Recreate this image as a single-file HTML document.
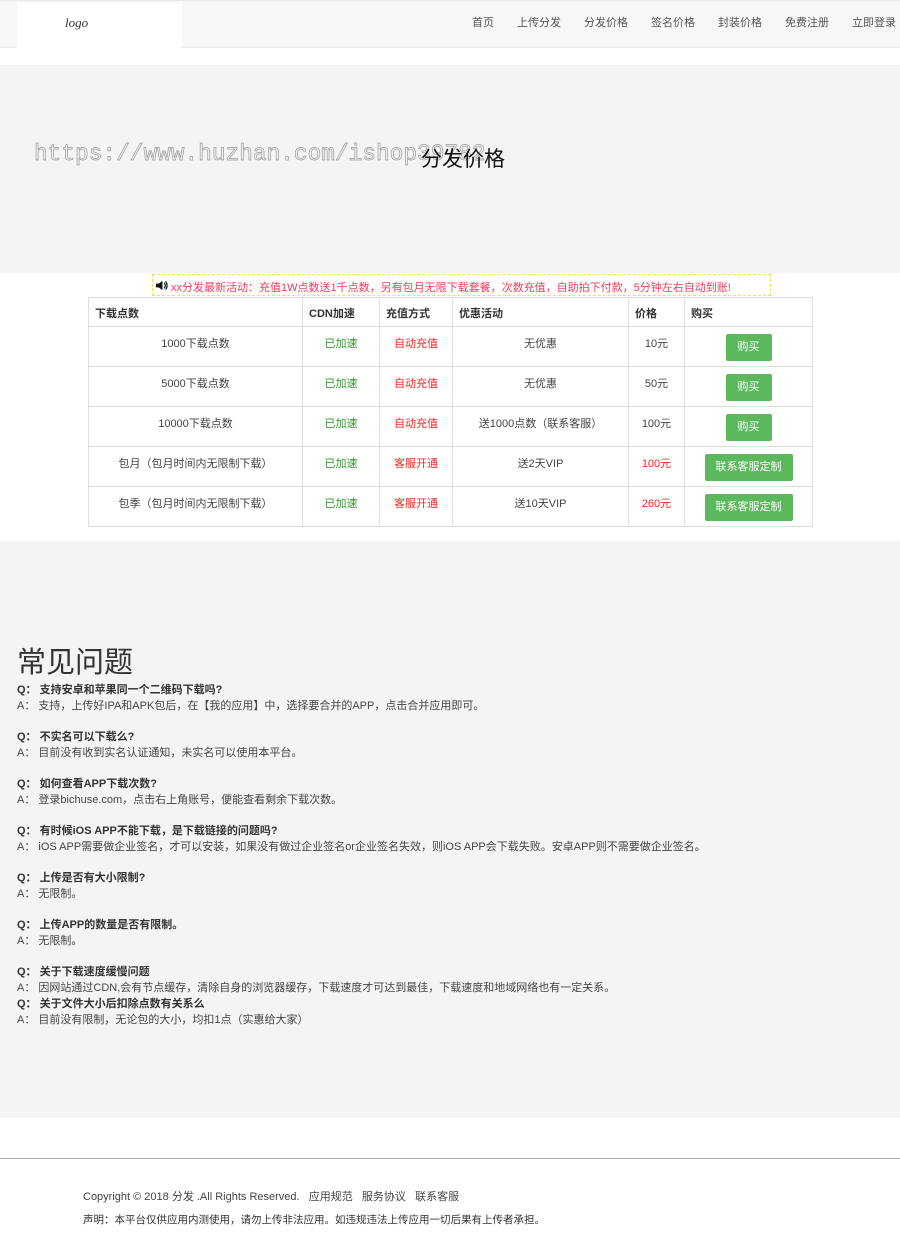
<!DOCTYPE html>
<html><head><meta charset="utf-8"><style>
*{margin:0;padding:0;box-sizing:border-box}
body{width:900px;height:1234px;font-family:"Liberation Sans","Noto Sans CJK SC",sans-serif;background:#fff;color:#333;font-size:11px;position:relative;overflow:hidden}
.nav{position:absolute;top:0;left:0;width:900px;height:48px;background:#f7f7f7;border-top:1px solid #e8e8e8;border-bottom:1px solid #e8e8e8}
.logo{position:absolute;left:17px;top:2px;width:165px;height:45px;background:#fff;font-family:"Liberation Serif",serif;font-style:italic;font-size:13px;padding:12px 0 0 48px;color:#333}
.menu{position:absolute;top:13px;right:4px;font-size:11px;color:#555}
.menu span{margin-left:23px}
.hero{position:absolute;top:65px;left:0;width:900px;height:208px;background:#f4f4f4}
.wm{position:absolute;left:34px;top:76px;font-family:"Liberation Mono",monospace;font-size:22.8px;color:#f4f4f4;-webkit-text-stroke:0.7px #999}
.ht{position:absolute;left:421px;top:78px;font-size:21px;color:#111}
.notice{position:absolute;left:152px;top:274px;width:619px;height:22px;border:1px dashed #e5e55a;color:#f03c5a;font-size:11px;padding:4px 0 0 18px}
.spk{position:absolute;left:2px;top:4px;width:13px;height:13px}
table{position:absolute;left:88px;top:297px;width:725px;border-collapse:collapse;font-size:11px}
td,th{border:1px solid #ddd;height:40px;vertical-align:top;padding-top:8px;text-align:center;font-weight:normal;color:#444}
th{height:29px;text-align:left;font-weight:bold;padding:7px 6px 0;color:#333}
.g{color:#2a9a2a}.r{color:#f22}
.btn{display:inline-block;background:#5cb85c;color:#fff;border-radius:2px;height:27px;line-height:27px;padding:0 12px;margin-top:-1px}
.btn2{padding:0 11px}
.gray{position:absolute;top:541px;left:0;width:900px;height:577px;background:#f4f4f4}
h2{position:absolute;left:17px;top:98px;font-size:29px;font-weight:normal;color:#333}
.faq{position:absolute;left:17px;top:141px;font-size:11px;line-height:16px;color:#444}
.faq b{color:#333}
.faq p.sp{height:15px}
.foot{position:absolute;top:1158px;left:0;width:900px;border-top:1px solid #aaa}
.f1{position:absolute;left:83px;top:1188px;font-size:11px;color:#444}
.f2{position:absolute;left:83px;top:1212px;font-size:10.5px;color:#333}
</style></head><body>
<div class="nav"><div class="logo">logo</div>
<div class="menu"><span>首页</span><span>上传分发</span><span>分发价格</span><span>签名价格</span><span>封装价格</span><span>免费注册</span><span>立即登录</span></div></div>
<div class="hero"><div class="wm">https://www.huzhan.com/ishop39782</div><div class="ht">分发价格</div></div>
<div class="notice"><svg class="spk" viewBox="0 0 14 14"><path d="M1 5h3l4-3v10l-4-3H1z" fill="#111"/><path d="M10 4q2 3 0 6M11.5 2.5q3 4.5 0 9" stroke="#111" fill="none" stroke-width="1.3"/></svg>xx分发最新活动：充值1W点数送1千点数，另有包月无限下载套餐，次数充值，自助拍下付款，5分钟左右自动到账!</div>
<table>
<tr><th style="width:214px">下载点数</th><th style="width:77px">CDN加速</th><th style="width:73px">充值方式</th><th style="width:176px">优惠活动</th><th style="width:56px">价格</th><th>购买</th></tr>
<tr><td>1000下载点数</td><td class="g">已加速</td><td class="r">自动充值</td><td>无优惠</td><td>10元</td><td><span class="btn">购买</span></td></tr>
<tr><td>5000下载点数</td><td class="g">已加速</td><td class="r">自动充值</td><td>无优惠</td><td>50元</td><td><span class="btn">购买</span></td></tr>
<tr><td>10000下载点数</td><td class="g">已加速</td><td class="r">自动充值</td><td>送1000点数（联系客服）</td><td>100元</td><td><span class="btn">购买</span></td></tr>
<tr><td>包月（包月时间内无限制下载）</td><td class="g">已加速</td><td class="r">客服开通</td><td>送2天VIP</td><td class="r">100元</td><td><span class="btn btn2">联系客服定制</span></td></tr>
<tr><td>包季（包月时间内无限制下载）</td><td class="g">已加速</td><td class="r">客服开通</td><td>送10天VIP</td><td class="r">260元</td><td><span class="btn btn2">联系客服定制</span></td></tr>
</table>
<div class="gray"><h2>常见问题</h2>
<div class="faq">
<p><b>Q：&nbsp;支持安卓和苹果同一个二维码下载吗?</b></p><p>A：&nbsp;支持，上传好IPA和APK包后，在【我的应用】中，选择要合并的APP，点击合并应用即可。</p><p class="sp"></p>
<p><b>Q：&nbsp;不实名可以下载么?</b></p><p>A：&nbsp;目前没有收到实名认证通知，未实名可以使用本平台。</p><p class="sp"></p>
<p><b>Q：&nbsp;如何查看APP下载次数?</b></p><p>A：&nbsp;登录bichuse.com，点击右上角账号，便能查看剩余下载次数。</p><p class="sp"></p>
<p><b>Q：&nbsp;有时候iOS APP不能下载，是下载链接的问题吗?</b></p><p>A：&nbsp;iOS APP需要做企业签名，才可以安装，如果没有做过企业签名or企业签名失效，则iOS APP会下载失败。安卓APP则不需要做企业签名。</p><p class="sp"></p>
<p><b>Q：&nbsp;上传是否有大小限制?</b></p><p>A：&nbsp;无限制。</p><p class="sp"></p>
<p><b>Q：&nbsp;上传APP的数量是否有限制。</b></p><p>A：&nbsp;无限制。</p><p class="sp"></p>
<p><b>Q：&nbsp;关于下载速度缓慢问题</b></p><p>A：&nbsp;因网站通过CDN,会有节点缓存，清除自身的浏览器缓存，下载速度才可达到最佳，下载速度和地域网络也有一定关系。</p>
<p><b>Q：&nbsp;关于文件大小后扣除点数有关系么</b></p><p>A：&nbsp;目前没有限制，无论包的大小，均扣1点（实惠给大家）</p>
</div></div>
<div class="foot"></div>
<div class="f1">Copyright © 2018 分发 .All Rights Reserved. &nbsp;&nbsp;应用规范 &nbsp;&nbsp;服务协议 &nbsp;&nbsp;联系客服</div>
<div class="f2">声明：本平台仅供应用内测使用，请勿上传非法应用。如违规违法上传应用一切后果有上传者承担。</div>
</body></html>
